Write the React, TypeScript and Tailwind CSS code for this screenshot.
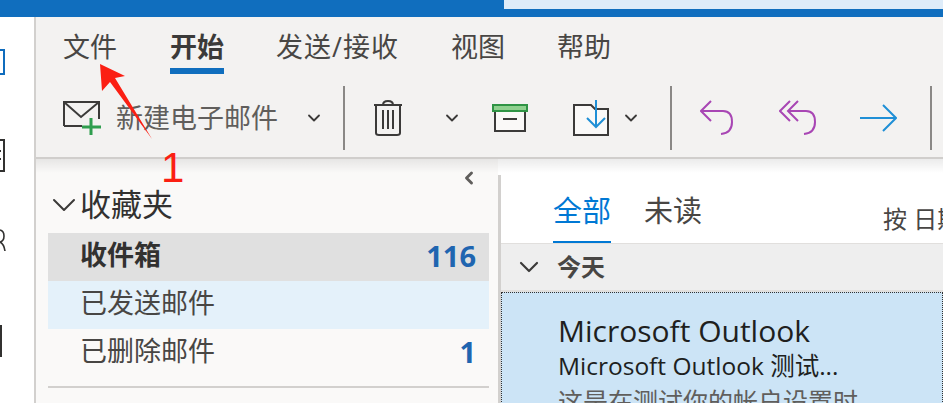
import { ChevronDown, ChevronLeft } from "lucide-react";

const font = { cjk: "font-['Open_Sans','Noto_Sans_CJK_SC',sans-serif]" };

function Small({ className }: { className?: string }) {
  return <ChevronDown className={`h-[20px] w-[20px] text-[#3b3a39] ${className ?? ""}`} strokeWidth={2.2} />;
}

function Divider() {
  return <div className="h-[64px] w-[2px] bg-[#8a8886]" />;
}

function MailIcon() {
  return (
    <svg width="38" height="35" viewBox="0 0 38 35" fill="none">
      <path d="M1 25V1h35v17" stroke="#3b3a39" strokeWidth="2" />
      <path d="M1 25h18M1 1l17 15L36 1" stroke="#3b3a39" strokeWidth="2" />
      <path d="M28 17v17M19 26h19" stroke="#2f9e4f" strokeWidth="3" />
    </svg>
  );
}

function TrashIcon() {
  return (
    <svg width="30" height="36" viewBox="0 0 30 36" fill="none" stroke="#3b3a39" strokeWidth="2">
      <path d="M1 5h28M3 5v28q0 2 3 2h18q3 0 3-2V5M10 5q0-4 5-4t5 4M10 10v19M15 10v19M20 10v19" />
    </svg>
  );
}

function ArchiveIcon() {
  return (
    <svg width="36" height="28" viewBox="0 0 36 28" fill="none">
      <path d="M3 7h30v20H3z" fill="#faf9f8" stroke="#3b3a39" strokeWidth="2" />
      <path d="M1 1h34v6H1z" fill="#8fd18f" stroke="#2f9445" strokeWidth="2" />
      <path d="M11 15h14" stroke="#3b3a39" strokeWidth="2" />
    </svg>
  );
}

function MoveIcon() {
  return (
    <svg width="36" height="36" viewBox="0 0 36 36" fill="none">
      <path d="M1 35V5h17l4 4h13v26z" fill="#faf9f8" stroke="#3b3a39" strokeWidth="2" />
      <path d="M23 0v26M14 18l9 9 9-9" stroke="#1f8fd6" strokeWidth="2" />
    </svg>
  );
}

function ReplyIcon() {
  return (
    <svg width="34" height="36" viewBox="0 0 34 36" fill="none" stroke="#a846b4" strokeWidth="2">
      <path d="M11 1L1 11l10 10M1 11h22q9 0 9 11t-11 12" />
    </svg>
  );
}

function ReplyAllIcon() {
  return (
    <svg width="37" height="36" viewBox="0 0 37 36" fill="none" stroke="#a846b4" strokeWidth="2">
      <path d="M11 1L1 11l10 10M19 1L9 11l10 10M9 11h18q9 0 9 11t-11 12" />
    </svg>
  );
}

function ForwardIcon() {
  return (
    <svg width="37" height="28" viewBox="0 0 37 28" fill="none" stroke="#1f8fd6" strokeWidth="2">
      <path d="M0 14h35M23 1l13 13-13 13" />
    </svg>
  );
}

function FolderRow({ label, count, bold, className }: { label: string; count?: string; bold?: boolean; className?: string }) {
  return (
    <div className={`flex h-[48px] items-center justify-between pb-[3px] pl-[32px] pr-[13px] ${className ?? ""}`}>
      <span className={`text-[27px] ${bold ? "font-bold text-[#323130]" : "text-[#484644]"}`}>{label}</span>
      {count && <span className="text-[29px] font-bold text-[#1f65b0]">{count}</span>}
    </div>
  );
}

export default function App() {
  return (
    <div className={`relative h-[403px] w-[943px] overflow-hidden bg-white ${font.cjk}`}>
      {/* title bar */}
      <div className="flex h-[17px] justify-end bg-[#106ebe]">
        <div className="h-[9px] w-[439px] bg-[#deecf9]" />
      </div>

      <div className="flex h-[386px]">
        {/* left rail, icons cut off at the edge */}
        <div className="relative w-[36px] shrink-0 border-r-2 border-[#d2d0ce] bg-white">
          <div className="absolute left-[-20px] top-[32px] h-[26px] w-[25px] border-2 border-[#0f6cbd]" />
          <div className="absolute left-[-20px] top-[122px] h-[33px] w-[25px] border-2 border-[#323130]">
            <div className="absolute right-[2px] top-[9px] h-[2px] w-[3px] bg-[#323130]" />
            <div className="absolute right-[2px] top-[17px] h-[2px] w-[3px] bg-[#323130]" />
          </div>
          <svg className="absolute left-0 top-[212px]" width="6" height="24" viewBox="0 0 6 24" fill="none" stroke="#323130" strokeWidth="1.6">
            <path d="M0 1q4 1 4 6t-4 6M0 13q4 2 5 9" />
          </svg>
          <div className="absolute left-0 top-[308px] h-[32px] w-[2px] bg-[#323130]" />
        </div>

        <div className="flex min-w-0 flex-1 flex-col">
          {/* ribbon */}
          <div className="h-[142px] shrink-0 border-b-2 border-[#d0cecc] bg-[#f3f2f1] pl-[27px]">
            <div className="flex h-[60px] items-center gap-[52px] whitespace-nowrap pt-[1px] text-[27px] text-[#484644]">
              <span>文件</span>
              <span className="relative ml-[1px] font-bold text-[#3b3a39]">
                开始
                <span className="absolute bottom-[-6px] left-0 h-[6px] w-full bg-[#106ebe]" />
              </span>
              <span className="tracking-[1px]">发送/接收</span>
              <span>视图</span>
              <span>帮助</span>
            </div>
            <div className="mt-[9px] flex h-[64px] items-center whitespace-nowrap">
              <MailIcon />
              <span className="ml-[15px] text-[27px] text-[#605e5c]">新建电子邮件</span>
              <Small className="ml-[26px]" />
              <div className="ml-[19px]"><Divider /></div>
              <div className="ml-[28px]"><TrashIcon /></div>
              <Small className="ml-[39px]" />
              <div className="ml-[30px]"><ArchiveIcon /></div>
              <div className="ml-[45px]"><MoveIcon /></div>
              <Small className="ml-[12px]" />
              <div className="ml-[29px]"><Divider /></div>
              <div className="ml-[28px]"><ReplyIcon /></div>
              <div className="ml-[45px]"><ReplyAllIcon /></div>
              <div className="ml-[44px]"><ForwardIcon /></div>
              <div className="ml-[33px]"><Divider /></div>
            </div>
          </div>

          <div className="relative flex min-h-0 flex-1">
            {/* folder pane */}
            <div className="relative h-full w-[462px] shrink-0 bg-[#faf9f8] pl-[12px]">
              <div className="flex h-[74px] items-end pb-[7px]">
                <ChevronDown className="-ml-[4px] mr-[-4px] mb-[1px] h-[40px] w-[40px] text-[#3b3a39]" strokeWidth={1.2} />
                <span className="text-[31px] leading-[44px] text-[#323130]">收藏夹</span>
              </div>
              <div className="w-[441px]">
                <FolderRow label="收件箱" count="116" bold className="bg-[#e0e0e0]" />
                <FolderRow label="已发送邮件" className="bg-[#e4f1fa]" />
                <FolderRow label="已删除邮件" count="1" />
                <div className="mt-[9px] h-[2px] bg-[#d2d0ce]" />
              </div>
              <ChevronLeft className="absolute right-[19px] top-[9px] h-[20px] w-[20px] text-[#605e5c]" strokeWidth={3.5} />
            </div>
            <div className="mt-[16px] w-[3px] shrink-0 bg-[#d2d0ce]" />

            {/* message list */}
            <div className="min-w-0 flex-1 bg-white">
              <div className="flex h-[85px] items-end whitespace-nowrap border-b-[1px] border-[#e1dfdd] pl-[52px]">
                <span className="border-b-[2px] border-[#0078d4] pb-[9px] text-[29px] leading-[42px] text-[#0078d4]">全部</span>
                <span className="ml-[33px] pb-[11px] text-[29px] leading-[42px] text-[#484644]">未读</span>
                <span className="ml-[181px] pb-[7px] text-[24px] leading-[34px] text-[#484644]">按 日期</span>
              </div>
              <div className="flex h-[48px] items-center border-b-2 border-[#e1dfdd] bg-[#eeeeee] pl-[12px]">
                <ChevronDown className="h-[32px] w-[32px] text-[#3b3a39]" strokeWidth={1.6} />
                <span className="ml-[12px] text-[24px] font-bold text-[#484644]">今天</span>
              </div>
              <div className="h-[120px] overflow-hidden border border-dotted border-[#323130] bg-[#cce4f6] pl-[56px]">
                <div className="whitespace-nowrap pt-[18px] text-[30px] leading-[40px] text-[#201f1e]">Microsoft Outlook</div>
                <div className="whitespace-nowrap text-[24.5px] leading-[30px] text-[#201f1e]">Microsoft Outlook 测试...</div>
                <div className="mt-[3px] whitespace-nowrap text-[25px] leading-[34px] text-[#605e5c]">这是在测试你的帐户设置时</div>
              </div>
            </div>
            {/* ribbon shadow */}
            <div className="absolute inset-x-0 top-0 h-[14px] bg-gradient-to-b from-[#00000014] to-transparent" />
          </div>
        </div>
      </div>

      {/* red annotation */}
      <svg className="absolute left-[95px] top-[60px]" width="60" height="85" viewBox="0 0 60 85">
        <path d="M5 4L30 16 20 18 57 79 15 22 7 31z" fill="#fb1f13" />
      </svg>
      <span className="absolute left-[161px] top-[145px] font-['Liberation_Sans',sans-serif] text-[42px] leading-[46px] text-[#fb1f13]">1</span>
    </div>
  );
}
